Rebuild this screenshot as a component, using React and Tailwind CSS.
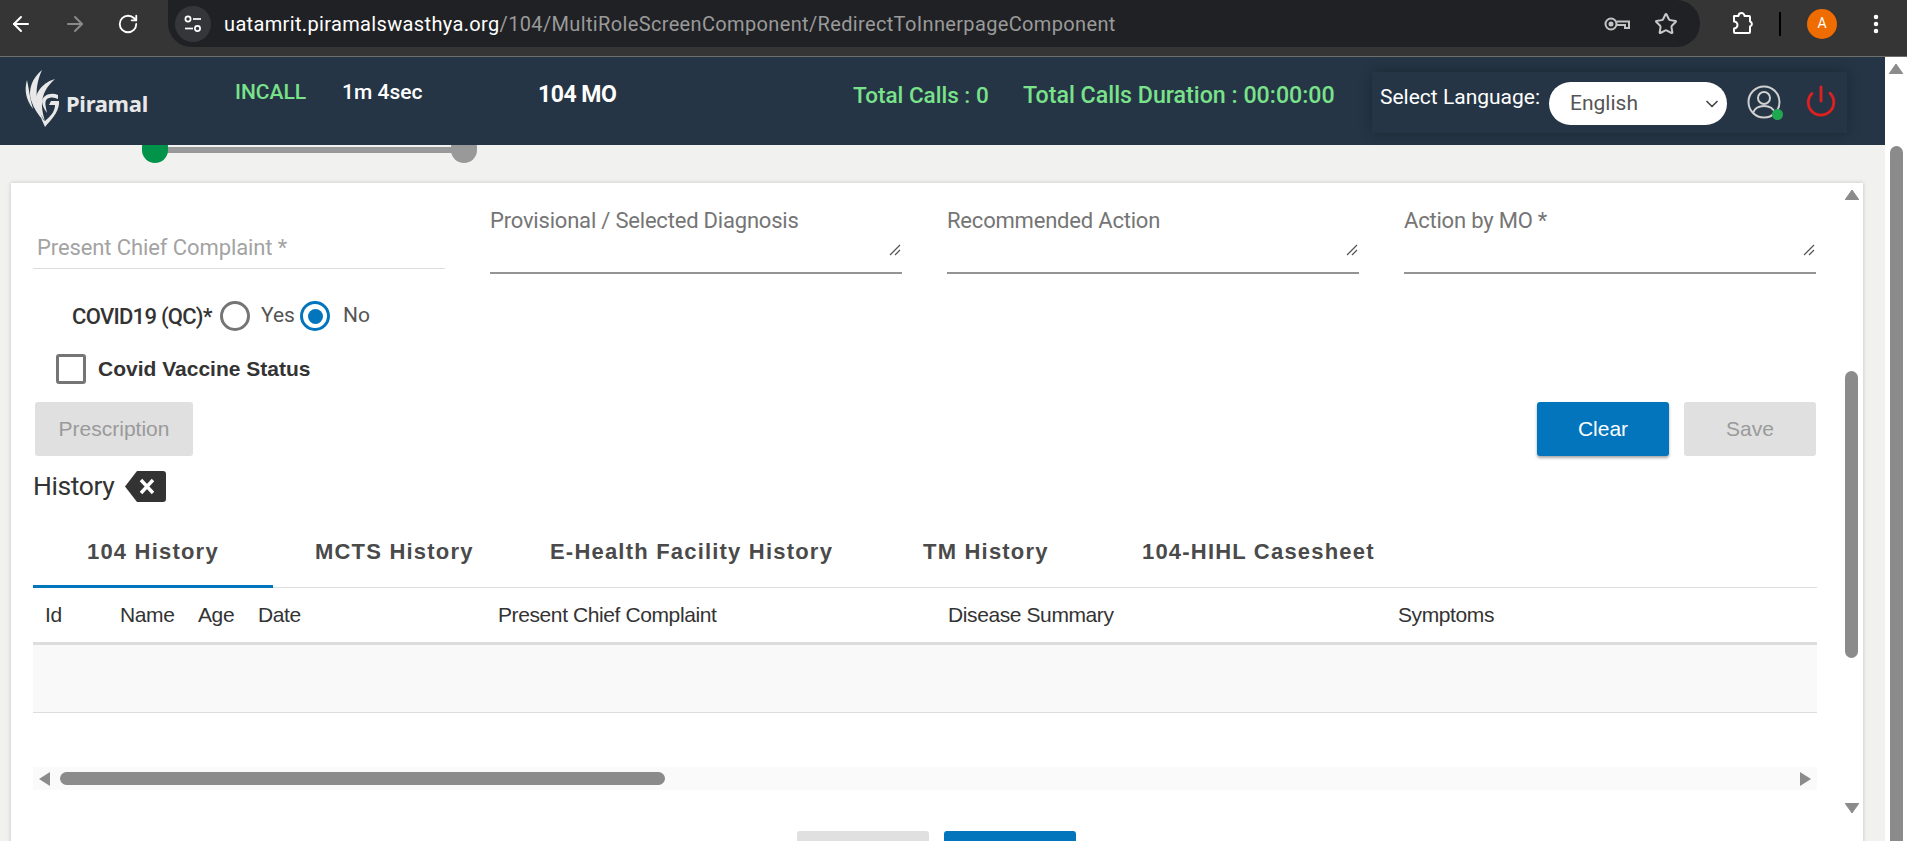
import { ArrowLeft, ArrowRight, RotateCw, Star, EllipsisVertical, ChevronDown, Power } from 'lucide-react';

const tabs = [
  { label: '104 History', cls: 'w-[240px] pl-[54px] border-[#0275bd]' },
  { label: 'MCTS History', cls: 'pl-[42px] w-[277px] border-transparent' },
  { label: 'E-Health Facility History', cls: 'w-[373px] border-transparent' },
  { label: 'TM History', cls: 'w-[219px] border-transparent' },
  { label: '104-HIHL Casesheet', cls: 'border-transparent' },
];

const columns = [
  { label: 'Id', cls: 'w-[75px]' },
  { label: 'Name', cls: 'w-[78px]' },
  { label: 'Age', cls: 'w-[60px]' },
  { label: 'Date', cls: 'w-[240px]' },
  { label: 'Present Chief Complaint', cls: 'w-[450px]' },
  { label: 'Disease Summary', cls: 'w-[450px]' },
  { label: 'Symptoms', cls: 'flex-1' },
];

function Triangle({ dir, className }) {
  const points = {
    up: '0,10 7,0 14,10',
    down: '0,0 14,0 7,10',
  };
  return (
    <svg width="14" height="10" viewBox="0 0 14 10" className={className}>
      <polygon points={points[dir]} fill="#8b8b8b" strokeLinejoin="round" stroke="#8b8b8b" strokeWidth="1" />
    </svg>
  );
}

function BrowserBar() {
  return (
    <div className="h-[57px] shrink-0 flex items-start bg-[#353535] border-b border-[#6f6f6b] font-['Roboto',sans-serif]">
      <div className="w-[168px] h-[47px] flex items-center shrink-0 pl-[9px] gap-[30px]">
        <ArrowLeft className="w-6 h-6 text-white" strokeWidth={2} />
        <ArrowRight className="w-6 h-6 text-[#8a8a8a]" strokeWidth={2} />
        <RotateCw className="w-[22px] h-[22px] text-white" strokeWidth={2} />
      </div>
      <div className="w-[1532px] h-[47px] bg-[#202124] rounded-r-[24px] rounded-bl-[24px] flex items-center pl-[7px] pr-[22px]">
        <div className="w-9 h-9 rounded-full bg-[#35363a] flex items-center justify-center shrink-0">
          <svg width="20" height="20" viewBox="0 0 20 20" fill="none" stroke="white" strokeWidth="1.7">
            <circle cx="5" cy="5" r="2.6" />
            <line x1="10" y1="5" x2="18" y2="5" />
            <circle cx="14.5" cy="14.5" r="2.6" />
            <line x1="2" y1="14.5" x2="10" y2="14.5" />
          </svg>
        </div>
        <div className="ml-[13px] text-[20px] tracking-[0.35px] text-white whitespace-nowrap">
          uatamrit.piramalswasthya.org<span className="text-[#9a9a9a]">/104/MultiRoleScreenComponent/RedirectToInnerpageComponent</span>
        </div>
        <div className="ml-auto flex items-center gap-[24px]">
          <svg width="26" height="16" viewBox="0 0 26 16" fill="none" stroke="#c4c4c4" strokeWidth="2">
            <circle cx="7" cy="8" r="5.5" />
            <circle cx="7" cy="8" r="1.5" fill="#c4c4c4" />
            <path d="M12.5 5.5H25V12H21V9H13" />
          </svg>
          <Star className="w-6 h-6 text-[#c8c8c8]" strokeWidth={2} />
        </div>
      </div>
      <div className="flex-1 h-[47px] flex items-center pl-[29px]">
        <svg width="26" height="26" viewBox="0 0 26 26" fill="none" stroke="white" strokeWidth="2" strokeLinejoin="round">
          <path d="M5 5h4.5a3 3 0 0 1 6 0H20a1 1 0 0 1 1 1v4.5a2.6 2.6 0 0 1 0 5V21a1 1 0 0 1-1 1H6a1 1 0 0 1-1-1v-3.5a3.5 3.5 0 0 0 0-7V6a1 1 0 0 1 0-1z" />
        </svg>
        <div className="ml-[24px] w-[2px] h-6 bg-black" />
        <div className="ml-[26px] w-[30px] h-[30px] rounded-full bg-[#ef6c00] flex items-center justify-center text-white text-[14px]">A</div>
        <EllipsisVertical className="ml-[27px] w-6 h-6 text-white" strokeWidth={2.5} />
      </div>
    </div>
  );
}

function Logo() {
  return (
    <svg width="36" height="57" viewBox="0 0 36 57" fill="#e8e8e8">
      <path d="M3 10C0 20 2 30 9 39C6 29 5 19 3 10Z" />
      <path d="M18 0C8 8 4 20 7 30C10 39 15 46 20 51C14 38 8 22 18 0Z" />
      <path d="M31 9C20 12 11 22 12 31C13 38 17 45 21 51C18 40 13 25 31 9Z" />
      <path d="M34 25C27 22 19 25 18 31C18 35 20 39 23 43C22 37 20 32 23 29C26 27 30 27 34 29Z" />
      <path d="M35 28V34C34 43 27 50 21 57L17 48L21 51C27 46 31 41 31 35H25L27 31H35Z" />
    </svg>
  );
}

function AppHeader() {
  return (
    <div className="relative z-10 h-[88px] shrink-0 bg-[#253545] flex items-start font-['Roboto',sans-serif]">
      <div className="w-[235px] shrink-0 flex items-center pl-[24px] pt-[13px]">
        <Logo />
        <span className="ml-[6px] mt-[8px] text-[22px] leading-none font-bold text-[#e8e8e8] font-['Noto_Sans',sans-serif] tracking-[-0.3px]">Piramal</span>
      </div>
      <span className="mt-[24px] w-[107px] text-[21px] leading-[22px] font-medium text-[#79e28a]">INCALL</span>
      <span className="mt-[24px] w-[196px] text-[21px] leading-[22px] font-medium text-white">1m 4sec</span>
      <span className="mt-[25px] w-[315px] text-[23px] leading-[26px] font-bold text-white tracking-[-0.5px]">104 MO</span>
      <span className="mt-[26px] w-[170px] text-[22.5px] leading-[24px] font-medium text-[#79e28a] whitespace-nowrap">Total Calls : 0</span>
      <span className="mt-[26px] w-[349px] text-[23.2px] leading-[24px] font-medium text-[#79e28a] whitespace-nowrap">Total Calls Duration : 00:00:00</span>
      <div className="mt-[15px] w-[475px] h-[61px] bg-[#253545] shadow-[0_0_12px_rgba(0,0,0,0.25)] flex items-center pl-[8px]">
        <span className="w-[169px] text-[21px] text-white mb-[10px] whitespace-nowrap">Select Language:</span>
        <div className="mt-[2px] w-[178px] h-[43px] bg-white rounded-[22px] flex items-center pl-[21px] pr-[5px] text-[21px] text-[#555555]">
          English
          <ChevronDown className="ml-auto w-5 h-5 text-[#444444]" strokeWidth={2} />
        </div>
        <div className="relative ml-[20px] w-[34px] h-[34px] mb-[2px]">
          <svg width="34" height="34" viewBox="0 0 34 34" fill="none" stroke="#d0d0d0" strokeWidth="2">
            <circle cx="17" cy="17" r="15.5" />
            <circle cx="17" cy="13" r="6" />
            <path d="M6 28 C8 22 12 21 17 21 C22 21 26 22 28 28" />
          </svg>
          <span className="absolute right-[-2px] bottom-[-1px] w-[11px] h-[11px] rounded-full bg-[#1fa84f]" />
        </div>
        <Power className="ml-[23px] mb-[4px] w-[34px] h-[34px] text-[#e02020]" strokeWidth={2} />
      </div>
    </div>
  );
}

function AreaField({ label }) {
  return (
    <div className="w-[412px]">
      <div className="text-[22px] leading-[24px] text-[#757575] font-['Roboto',sans-serif] pt-[26px] box-content tracking-[-0.2px]">{label}</div>
      <div className="h-[39px] flex items-end justify-end pr-[1px] pb-[16px]">
        <svg width="12" height="12" viewBox="0 0 12 12" stroke="#555555" strokeWidth="1.2">
          <line x1="1" y1="11" x2="11" y2="1" />
          <line x1="6" y1="11" x2="11" y2="6" />
        </svg>
      </div>
      <div className="h-[2px] bg-[#949494]" />
    </div>
  );
}

function Radio({ checked }) {
  return (
    <span className={`w-[30px] h-[30px] shrink-0 rounded-full border-[3px] flex items-center justify-center ${checked ? 'border-[#0275bd]' : 'border-[#757575]'}`}>
      {checked && <span className="w-[15px] h-[15px] rounded-full bg-[#0275bd]" />}
    </span>
  );
}

function FormArea() {
  return (
    <div className="h-[219px] pl-[22px]">
      <div className="flex gap-[45px] h-[90px]">
        <div className="w-[412px] h-[86px] border-b border-[#dddddd] flex items-end pb-[4px] pl-[4px] text-[22px] text-[#a3a3a3] font-['Roboto',sans-serif] tracking-[-0.1px] whitespace-nowrap">
          Present Chief Complaint *
        </div>
        <AreaField label="Provisional / Selected Diagnosis" />
        <AreaField label="Recommended Action" />
        <AreaField label="Action by MO *" />
      </div>
      <div className="mt-[28px] flex items-center h-[30px] pl-[39px] font-['Roboto',sans-serif] text-[21px] text-[#555555] whitespace-nowrap">
        <span className="w-[148px] text-[22px] tracking-[-0.7px] font-medium text-[#333333]">COVID19 (QC)*</span>
        <Radio />
        <span className="ml-[11px] w-[39px]">Yes</span>
        <Radio checked />
        <span className="ml-[13px]">No</span>
      </div>
      <div className="mt-[23px] flex items-center h-[30px] pl-[23px]">
        <span className="w-[30px] h-[30px] rounded-[3px] border-[3px] border-[#757575]" />
        <span className="ml-[12px] text-[21px] font-bold text-[#333333] font-['Liberation_Sans',sans-serif]">Covid Vaccine Status</span>
      </div>
    </div>
  );
}

function Actions() {
  return (
    <div className="flex items-start pl-[24px] pr-[1px] font-['Liberation_Sans',sans-serif] text-[21px]">
      <button className="w-[158px] h-[54px] rounded-[3px] bg-[#e0e0e0] text-[#9a9a9a]">Prescription</button>
      <button className="ml-auto w-[132px] h-[54px] rounded-[3px] bg-[#0275bd] text-white shadow-[0_2px_3px_rgba(0,0,0,0.35)]">Clear</button>
      <button className="ml-[15px] w-[132px] h-[54px] rounded-[3px] bg-[#e0e0e0] text-[#9a9a9a]">Save</button>
    </div>
  );
}

function HistoryBlock() {
  return (
    <div className="pl-[22px]">
      <div className="h-[44px] mt-[8px] mb-[5px] flex items-center gap-[10px]">
        <span className="text-[26.5px] text-[#333333] font-['Roboto',sans-serif] tracking-[-0.4px]">History</span>
        <svg width="41" height="31" viewBox="0 0 41 31">
          <path d="M12 0H38a3 3 0 0 1 3 3V28a3 3 0 0 1-3 3H12L0 15.5Z" fill="#333333" />
          <path d="M16 9L28 22M28 9L16 22" stroke="white" strokeWidth="3.4" />
        </svg>
      </div>
      <div className="h-[75px] border-b border-[#dddddd] flex font-['Liberation_Sans',sans-serif] text-[22px] font-bold tracking-[1.2px] text-[#4a4a4a] whitespace-nowrap">
        {tabs.map(tab => (
          <div key={tab.label} className={`h-[75px] pt-[5px] flex items-center border-b-[3px] ${tab.cls}`}>
            {tab.label}
          </div>
        ))}
      </div>
      <div className="h-[57px] flex items-center border-b-[3px] border-[#dddddd] font-['Liberation_Sans',sans-serif] text-[21px] text-[#333333] tracking-[-0.4px]">
        {columns.map(col => (
          <div key={col.label} className={`${col.cls} pl-[12px]`}>{col.label}</div>
        ))}
      </div>
      <div className="h-[68px] bg-[#f9f9f9] border-b border-[#dddddd]" />
      <div className="mt-[54px] h-[23px] bg-[#fafafa] flex items-center px-[6px]">
        <svg width="11" height="14" viewBox="0 0 11 14"><polygon points="11,0 0,7 11,14" fill="#8b8b8b" /></svg>
        <div className="ml-[10px] w-[605px] h-[13px] rounded-[7px] bg-[#8b8b8b]" />
        <svg className="ml-auto" width="11" height="14" viewBox="0 0 11 14"><polygon points="0,0 11,7 0,14" fill="#8b8b8b" /></svg>
      </div>
    </div>
  );
}

export default function App() {
  return (
    <div className="h-screen overflow-hidden flex flex-col bg-[#f1f1ef]">
      <BrowserBar />
      <AppHeader />
      <div className="flex-1 min-h-0 flex overflow-hidden">
        <div className="w-[1885px] shrink-0 pl-[11px] pr-[22px]">
          {/* stepper */}
          <div className="relative h-[38px] pt-[2px]">
            <div className="absolute left-[131px] top-[-11px] w-[26px] h-[29px] rounded-full bg-[#02934a] z-[1]" />
            <div className="ml-[144px] w-[309px] h-[6px] bg-[#999999]" />
            <div className="absolute left-[440px] top-[-11px] w-[26px] h-[29px] rounded-full bg-[#999999]" />
          </div>
          <div className="bg-white shadow-[0_0_4px_rgba(0,0,0,0.2)] h-[700px] flex">
            <div className="w-[1834px] shrink-0 pr-[28px]">
              <FormArea />
              <Actions />
              <HistoryBlock />
              <div className="mt-[41px] pl-[786px] flex gap-[15px]">
                <div className="w-[132px] h-[40px] rounded-[3px] bg-[#e0e0e0]" />
                <div className="w-[132px] h-[40px] rounded-[3px] bg-[#0275bd]" />
              </div>
            </div>
          </div>
        </div>
        <div className="flex-1 bg-white" />
      </div>
      {/* page and card scrollbars */}
      <div className="fixed z-20 left-[1885px] right-0 top-[57px] bottom-0 bg-white flex flex-col items-center">
        <Triangle dir="up" className="mt-[7px]" />
        <div className="mt-[72px] w-[13px] flex-1 bg-[#8b8b8b] rounded-t-[7px]" />
      </div>
      <div className="fixed left-[1845px] w-[13px] top-[190px] h-[630px] flex flex-col items-center">
        <Triangle dir="up" />
        <div className="mt-[171px] w-[13px] h-[287px] rounded-[7px] bg-[#8b8b8b]" />
        <Triangle dir="down" className="mt-auto mb-[7px]" />
      </div>
    </div>
  );
}
